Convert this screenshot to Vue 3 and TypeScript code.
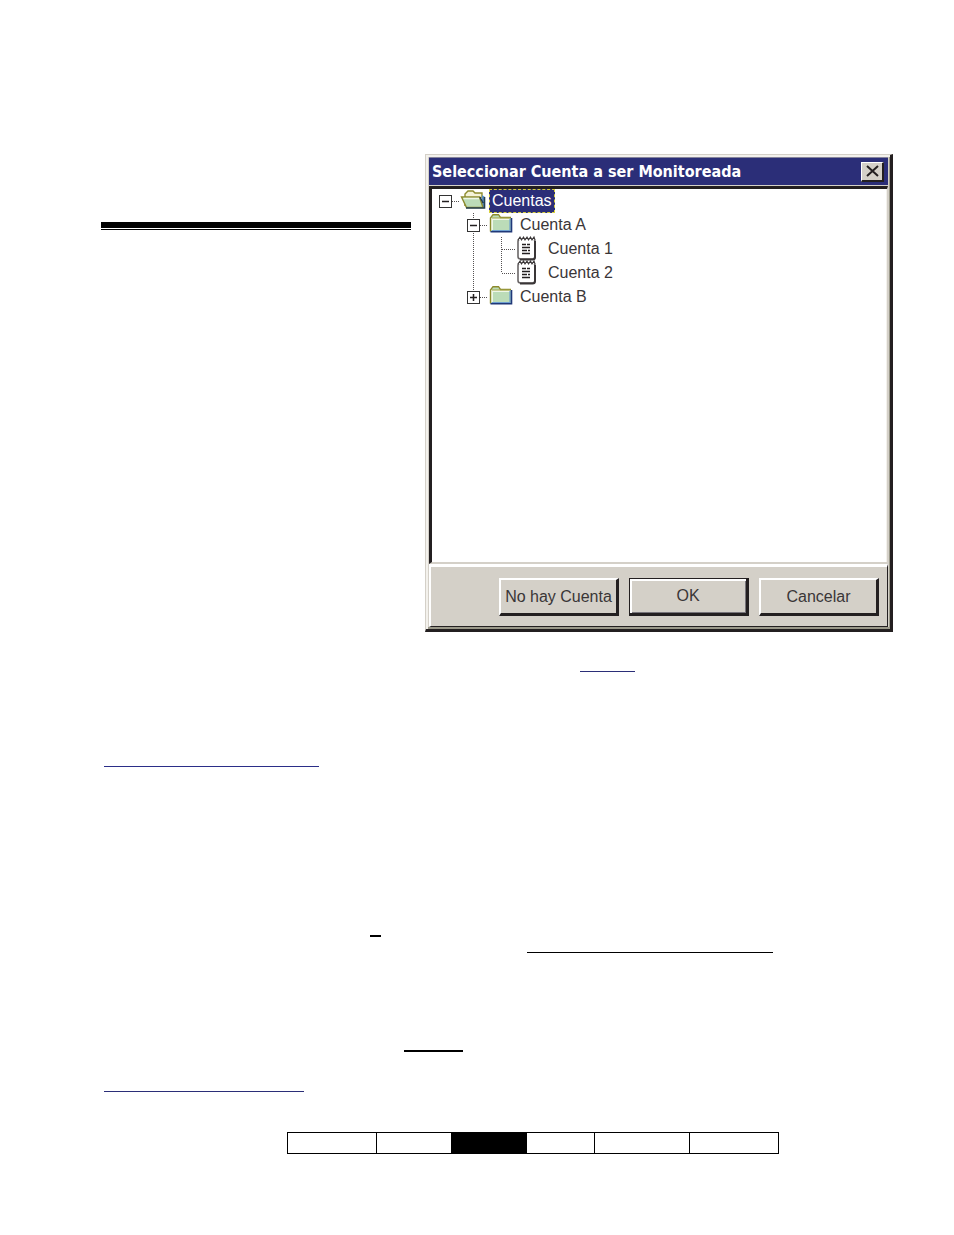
<script setup lang="ts">
import { computed, ref } from 'vue'

interface TreeNode {
  id: string
  label: string
  level: number
  parent?: string
  icon: 'open' | 'folder' | 'note'
  branch?: boolean
  last?: boolean
}

const nodes: TreeNode[] = [
  { id: 'root', label: 'Cuentas', level: 0, icon: 'open', branch: true },
  { id: 'a', label: 'Cuenta A', level: 1, parent: 'root', icon: 'folder', branch: true },
  { id: 'a1', label: 'Cuenta 1', level: 2, parent: 'a', icon: 'note' },
  { id: 'a2', label: 'Cuenta 2', level: 2, parent: 'a', icon: 'note', last: true },
  { id: 'b', label: 'Cuenta B', level: 1, parent: 'root', icon: 'folder', branch: true, last: true },
]

const expanded = ref<Record<string, boolean>>({ root: true, a: true })
const selected = ref('root')

const visible = computed(() =>
  nodes.filter((n) => {
    let parent = n.parent
    while (parent) {
      if (!expanded.value[parent]) return false
      parent = nodes.find((p) => p.id === parent)?.parent
    }
    return true
  }),
)

function toggle(id: string) {
  expanded.value = { ...expanded.value, [id]: !expanded.value[id] }
}

const tabs = ['t1', 't2', 't3', 't4', 't5', 't6']
const currentTab = 't3'
</script>

<template>
  <main class="page">
    <section class="top">
      <div class="double-rule"></div>
      <div class="dialog" role="dialog" aria-labelledby="dialog-title">
        <header class="titlebar">
          <h1 id="dialog-title">Seleccionar Cuenta a ser Monitoreada</h1>
          <button class="close" type="button" aria-label="Cerrar">
            <svg width="13" height="12" viewBox="0 0 13 12">
              <path d="M1 1L12 11M12 1L1 11" stroke="#231f20" stroke-width="2" fill="none" />
            </svg>
          </button>
        </header>

        <ul class="tree" role="tree">
          <li v-for="n in visible" :key="n.id" class="row" role="treeitem" :aria-selected="selected === n.id">
            <svg v-if="n.level > 0" class="cell" viewBox="0 0 28 24"></svg>
            <svg v-if="n.level > 1" class="cell" viewBox="0 0 28 24">
              <path class="dots" d="M13.5 0V24" />
            </svg>
            <span class="cell joint">
              <svg class="cell" viewBox="0 0 28 24">
                <path v-if="n.level > 0" class="dots" :d="n.last ? 'M13.5 0V12' : 'M13.5 0V24'" />
                <path class="dots" d="M14 12.5H28" />
              </svg>
              <button
                v-if="n.branch"
                class="toggle"
                type="button"
                :aria-label="(expanded[n.id] ? 'Contraer ' : 'Expandir ') + n.label"
                @click="toggle(n.id)"
              >
                <svg width="9" height="9" viewBox="0 0 9 9">
                  <path :d="expanded[n.id] ? 'M1 4.5H8' : 'M1 4.5H8M4.5 1V8'" stroke="#231f20" stroke-width="1.5" fill="none" />
                </svg>
              </button>
            </span>

            <svg v-if="n.icon === 'open'" class="cell" viewBox="0 0 28 24">
              <path d="M5 17V5L8 2H13L15 4H22V9" fill="#f4f3d8" stroke="#8c8a2c" stroke-width="1.4" />
              <path d="M22 6L25 8V18L22 19Z" fill="#5b8fc4" />
              <path d="M1.500 8H19.500L23 18.500H6.500Z" fill="#bcdcb8" stroke="#8c8a2c" stroke-width="1.4" />
              <path d="M3.500 9.500H19" stroke="#eef6e6" stroke-width="1.500" />
              <path d="M6 19H24.500V8M20 8L23 14" fill="none" stroke="#243f50" stroke-width="1.600" />
            </svg>
            <svg v-else-if="n.icon === 'folder'" class="cell" viewBox="0 0 28 24">
              <path d="M3 18V5L5 2H10L12 4.500H23V18Z" fill="#bcdcb8" />
              <path d="M4 17V6H22" fill="none" stroke="#eff7e8" stroke-width="2" />
              <path d="M2.500 18.500V5L5 1.700H10.500L12.500 4.500H23" fill="none" stroke="#8c8a2c" stroke-width="1.4" />
              <path d="M4 5H22" stroke="#a5a546" stroke-width="1" />
              <path d="M22 6V17.500H4" fill="none" stroke="#6d9fd0" stroke-width="1.2" />
              <path d="M23.500 5V18.800H2.500" fill="none" stroke="#203878" stroke-width="1.6" />
            </svg>
            <svg v-else class="cell" viewBox="0 0 28 24">
              <rect x="2" y="2" width="17" height="20" rx="2.500" fill="#fff" stroke="#6a6667" stroke-width="1.600" />
              <path d="M19 4V20Q19 22.500 16.500 22.500H4" fill="none" stroke="#3a3637" stroke-width="2" />
              <path d="M2 3L4 0L5.500 3L7.500 0L9 3L11 0L12.500 3L14.500 0L16 3L18 0L19 3" fill="#fff" stroke="#3a3637" stroke-width="1.1" />
              <path d="M6 7.500H10M11 7.500H14M6 10.500H14M6 13.500H11M12 13.500H14M6 16.500H14" stroke="#231f20" stroke-width="1.500" />
            </svg>

            <button class="label" :class="{ selected: selected === n.id }" type="button" @click="selected = n.id">
              {{ n.label }}
            </button>
          </li>
        </ul>

        <footer class="actions">
          <button class="btn" type="button">No hay Cuenta</button>
          <button class="btn default" type="button">OK</button>
          <button class="btn" type="button">Cancelar</button>
        </footer>
      </div>
    </section>

    <section class="lines">
      <hr class="line l1" />
      <hr class="line l2" />
      <hr class="line l3" />
      <hr class="line l4" />
      <hr class="line l5" />
      <hr class="line l6" />
    </section>

    <table class="tabs">
      <tbody>
        <tr>
          <td v-for="t in tabs" :key="t" :class="[t, { current: t === currentTab }]"></td>
        </tr>
      </tbody>
    </table>
  </main>
</template>

<style>
body {
  margin: 0;
  background: #fff;
}
</style>

<style scoped>
* {
  box-sizing: border-box;
}
.page {
  padding: 154px 61px 80px 101px;
  font-family: "Liberation Sans", Arial, sans-serif;
  font-size: 16px;
  color: #3a3637;
}
.top {
  display: flex;
  align-items: flex-start;
  gap: 14px;
}
.double-rule {
  flex: 1;
  height: 8px;
  margin-top: 68px;
  border-top: 6px solid #000;
  border-bottom: 1px solid #000;
}
.dialog {
  width: 468px;
  background: #d4d0c8;
  border: solid;
  border-width: 1px 3px 3px 1px;
  border-color: #d4d0c8 #231f20 #231f20 #d4d0c8;
  box-shadow: inset 2px 2px #f3f1ec, inset -1px -2px #9a9889;
  padding: 2px 2px 2px 3px;
}
.titlebar {
  display: flex;
  align-items: center;
  justify-content: space-between;
  height: 29px;
  padding: 0 4px 0 3px;
  background: #2b2e78;
  border-top: 1px solid #85839c;
  border-bottom: 1px solid #d4d0c8;
}
.titlebar h1 {
  margin: 0;
  color: #fff;
  font: bold 16px/26px "DejaVu Sans Condensed", "DejaVu Sans", Tahoma, sans-serif;
  white-space: nowrap;
}
button {
  font: inherit;
  color: inherit;
  padding: 0;
  border-radius: 0;
}
.close {
  display: flex;
  align-items: center;
  justify-content: center;
  width: 23px;
  height: 20px;
  background: #d4d0c8;
  border: solid;
  border-width: 1px 2px 2px 1px;
  border-color: #fff #231f20 #231f20 #fff;
}
.tree {
  height: 378px;
  margin: 0;
  padding: 0;
  list-style: none;
  background: #fff;
  border: solid;
  border-width: 3px 1px 2px 3px;
  border-color: #231f20 #d4d0c8 #d4d0c8 #231f20;
  box-shadow: inset -1px 0 #f3f1ec;
}
.row {
  display: flex;
  height: 24px;
}
.cell {
  flex: none;
  display: block;
  width: 28px;
  height: 24px;
  overflow: visible;
}
.joint {
  display: grid;
}
.joint > * {
  grid-area: 1 / 1;
}
.dots {
  fill: none;
  stroke: #555152;
  stroke-width: 1;
  stroke-dasharray: 1 1;
}
.toggle {
  display: flex;
  align-items: center;
  justify-content: center;
  align-self: center;
  width: 13px;
  height: 13px;
  margin-left: 7px;
  background: #fff;
  border: 1px solid #333;
}
.label {
  height: 24px;
  margin-left: 1px;
  padding: 0 3px;
  border: 0;
  background: none;
  line-height: 24px;
  white-space: nowrap;
}
.label.selected {
  padding: 0 2px;
  color: #fff;
  background: #2b2e78;
  border: 1px dashed #d8d040;
  line-height: 22px;
}
.actions {
  display: flex;
  justify-content: flex-end;
  gap: 10px;
  height: 63px;
  padding: 11px 8px 0;
  border: solid;
  border-width: 3px 1px 1px 2px;
  border-color: #fff #231f20 #231f20 #fff;
}
.btn {
  width: 120px;
  height: 38px;
  background: #d4d0c8;
  border: solid;
  border-width: 2px 3px 3px 2px;
  border-color: #fff #231f20 #231f20 #fff;
  white-space: nowrap;
}
.btn.default {
  box-shadow: inset 2px 2px #fff, inset -1px -1px #77747a;
  border-width: 1px 3px 3px 1px;
  border-color: #231f20;
}
.lines {
  display: flow-root;
}
.line {
  height: 1px;
  margin: 0;
  border: 0;
  background: #000;
}
.l1 { width: 55px; margin: 39px 0 0 479px; background: #2b2e78; }
.l2 { width: 215px; margin: 94px 0 0 3px; background: #2b2e88; }
.l3 { width: 11px; height: 2px; margin: 168px 0 0 269px; }
.l4 { width: 246px; margin: 15px 0 0 426px; }
.l5 { width: 59px; height: 2px; margin: 97px 0 0 303px; }
.l6 { width: 200px; margin: 39px 0 0 3px; background: #2b2e78; }
.tabs {
  margin: 40px 0 0 186px;
  border-collapse: collapse;
  table-layout: fixed;
  width: 492px;
}
.tabs td {
  height: 21px;
  padding: 0;
  border: 1px solid #000;
}
.tabs .current { background: #000; }
.t1 { width: 89px; }
.t2 { width: 75px; }
.t3 { width: 75px; }
.t4 { width: 68px; }
.t5 { width: 95px; }
.t6 { width: 89px; }
</style>
